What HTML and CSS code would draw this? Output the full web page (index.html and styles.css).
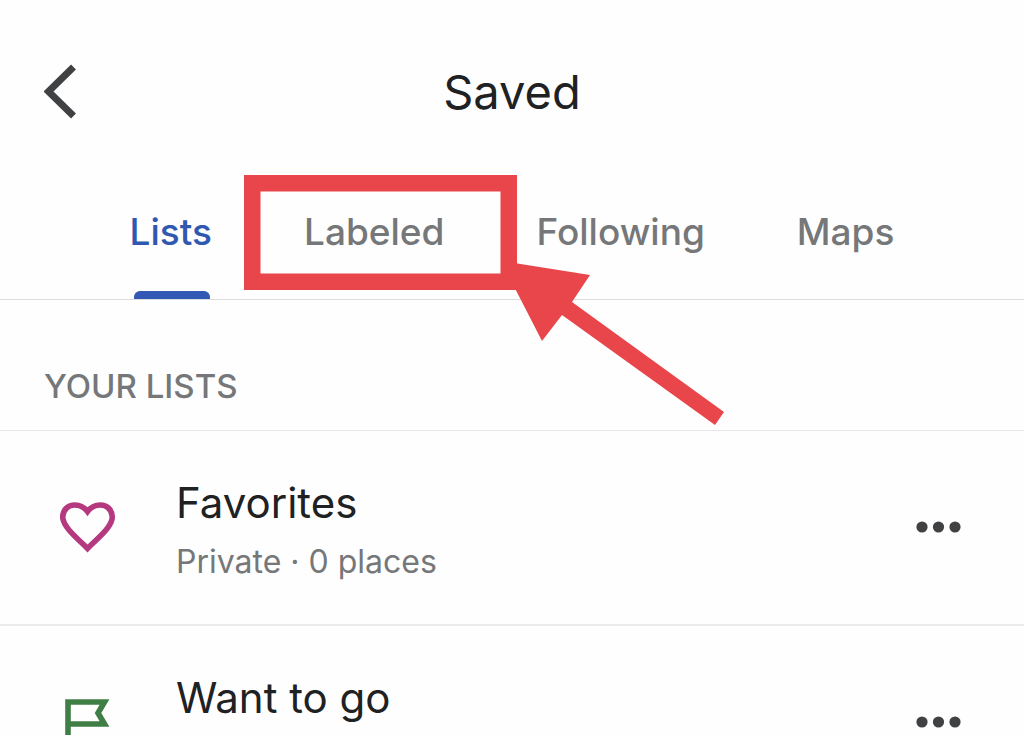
FILE: index.html
```html
<!DOCTYPE html>
<html lang="en">
<head>
<meta charset="utf-8">
<meta name="viewport" content="width=device-width, initial-scale=1">
<title>Saved</title>
<link rel="stylesheet" href="styles.css">
</head>
<body>
<div class="screen">
  <header class="header">
    <button class="icon-button" type="button" aria-label="Back">
      <svg width="34" height="56" viewBox="0 0 34 56" aria-hidden="true"><path d="M29.500 3 4.500 27.500 29.500 52" fill="none" stroke="#404143" stroke-width="7"/></svg>
    </button>
    <h1 class="title">Saved</h1>
  </header>
  <nav class="tabs" aria-label="Saved sections">
    <button class="tab tab-active" type="button" aria-current="page">Lists</button>
    <div class="callout-anchor">
      <button class="tab" type="button">Labeled</button>
      <svg class="callout" width="480" height="251" viewBox="0 0 480 251" aria-hidden="true">
        <rect x="8.250" y="8.250" width="256.500" height="98.500" fill="none" stroke="#e9464b" stroke-width="16.500"/>
        <path d="M257 86 346 100 328 127 480 237 471 250 318 140 298 166Z" fill="#e9464b"/>
      </svg>
    </div>
    <button class="tab" type="button">Following</button>
    <button class="tab" type="button">Maps</button>
  </nav>
  <main>
    <h2 class="section-title">YOUR LISTS</h2>
    <ul class="lists">
      <li class="row">
        <svg class="row-icon" width="56" height="56" viewBox="0 0 56 56" aria-hidden="true"><path d="M27.500 49.500C22 44 14 37 9 31C4.500 25.500 2.700 22.500 2.700 18C2.700 11 8 6 14.800 6C20 6 24.500 8.500 27.500 12.500C30.500 8.500 35 6 40.200 6C47 6 52.300 11 52.300 18C52.300 22.500 50.500 25.500 46 31C41 37 33 44 27.500 49.500Z" fill="none" stroke="#b5397f" stroke-width="5.600"/></svg>
        <div class="row-text">
          <h3 class="row-title">Favorites</h3>
          <p class="row-detail">Private · 0 places</p>
        </div>
        <button class="icon-button" type="button" aria-label="More options for Favorites">
          <svg width="46" height="14" viewBox="0 0 46 14" fill="#404143" aria-hidden="true"><circle cx="6" cy="7" r="5.600"/><circle cx="22.500" cy="7" r="5.600"/><circle cx="39" cy="7" r="5.600"/></svg>
        </button>
      </li>
      <li class="row">
        <svg class="row-icon" width="56" height="56" viewBox="0 0 56 56" aria-hidden="true"><path d="M8 56V8H44.500L38 19 44.500 30H8" fill="none" stroke="#3f7f45" stroke-width="5.600"/></svg>
        <div class="row-text">
          <h3 class="row-title">Want to go</h3>
        </div>
        <button class="icon-button" type="button" aria-label="More options for Want to go">
          <svg width="46" height="14" viewBox="0 0 46 14" fill="#404143" aria-hidden="true"><circle cx="6" cy="7" r="5.600"/><circle cx="22.500" cy="7" r="5.600"/><circle cx="39" cy="7" r="5.600"/></svg>
        </button>
      </li>
    </ul>
  </main>
</div>
</body>
</html>
```
FILE: styles.css
```css
* {
  box-sizing: border-box;
}

body,
h1,
h2,
h3,
p,
ul {
  margin: 0;
  padding: 0;
}

body {
  background: #fefefe;
  color: #202123;
  font-family: Inter, "Liberation Sans", sans-serif;
}

.screen {
  height: 100vh;
  overflow: auto;
  scrollbar-width: none;
}

button {
  border: 0;
  background: none;
  font: inherit;
  cursor: pointer;
}

.icon-button {
  display: flex;
  padding: 0;
}

.header {
  display: grid;
  grid-template-columns: 1fr auto 1fr;
  align-items: center;
  padding: 60px 44px;
}

.title {
  font-size: 47px;
  font-weight: 400;
  line-height: 63px;
}

.tabs {
  display: flex;
  justify-content: center;
  gap: 92px;
  border-bottom: 1px solid #dcdcde;
}

.tab {
  position: relative;
  padding: 25px 0 43px;
  color: #757779;
  font-size: 37px;
  font-weight: 500;
  line-height: 48px;
}

.tab-active {
  color: #3158b0;
}

.tab-active::after {
  content: "";
  position: absolute;
  right: 2px;
  bottom: 0;
  left: 4px;
  height: 8px;
  border-radius: 6px 6px 0 0;
  background: #3158b5;
}

.callout-anchor {
  position: relative;
}

.callout {
  position: absolute;
  top: -8px;
  left: -60px;
  z-index: 1;
  pointer-events: none;
}

.section-title {
  padding: 66px 44px 24px;
  border-bottom: 1px solid #e6e6e8;
  color: #757779;
  font-size: 33px;
  font-weight: 500;
  line-height: 40px;
}

.lists {
  list-style: none;
}

.row {
  display: flex;
  align-items: center;
  gap: 60px;
  padding: 41px 62px 42px 60px;
  border-bottom: 2px solid #ebebed;
}

.row-icon {
  flex: none;
}

.row-text {
  flex: 1;
  min-height: 110px;
}

.row-title {
  font-size: 42px;
  font-weight: 400;
  line-height: 62px;
}

.row-detail {
  padding-top: 7px;
  color: #757779;
  font-size: 32px;
  line-height: 41px;
}
```
